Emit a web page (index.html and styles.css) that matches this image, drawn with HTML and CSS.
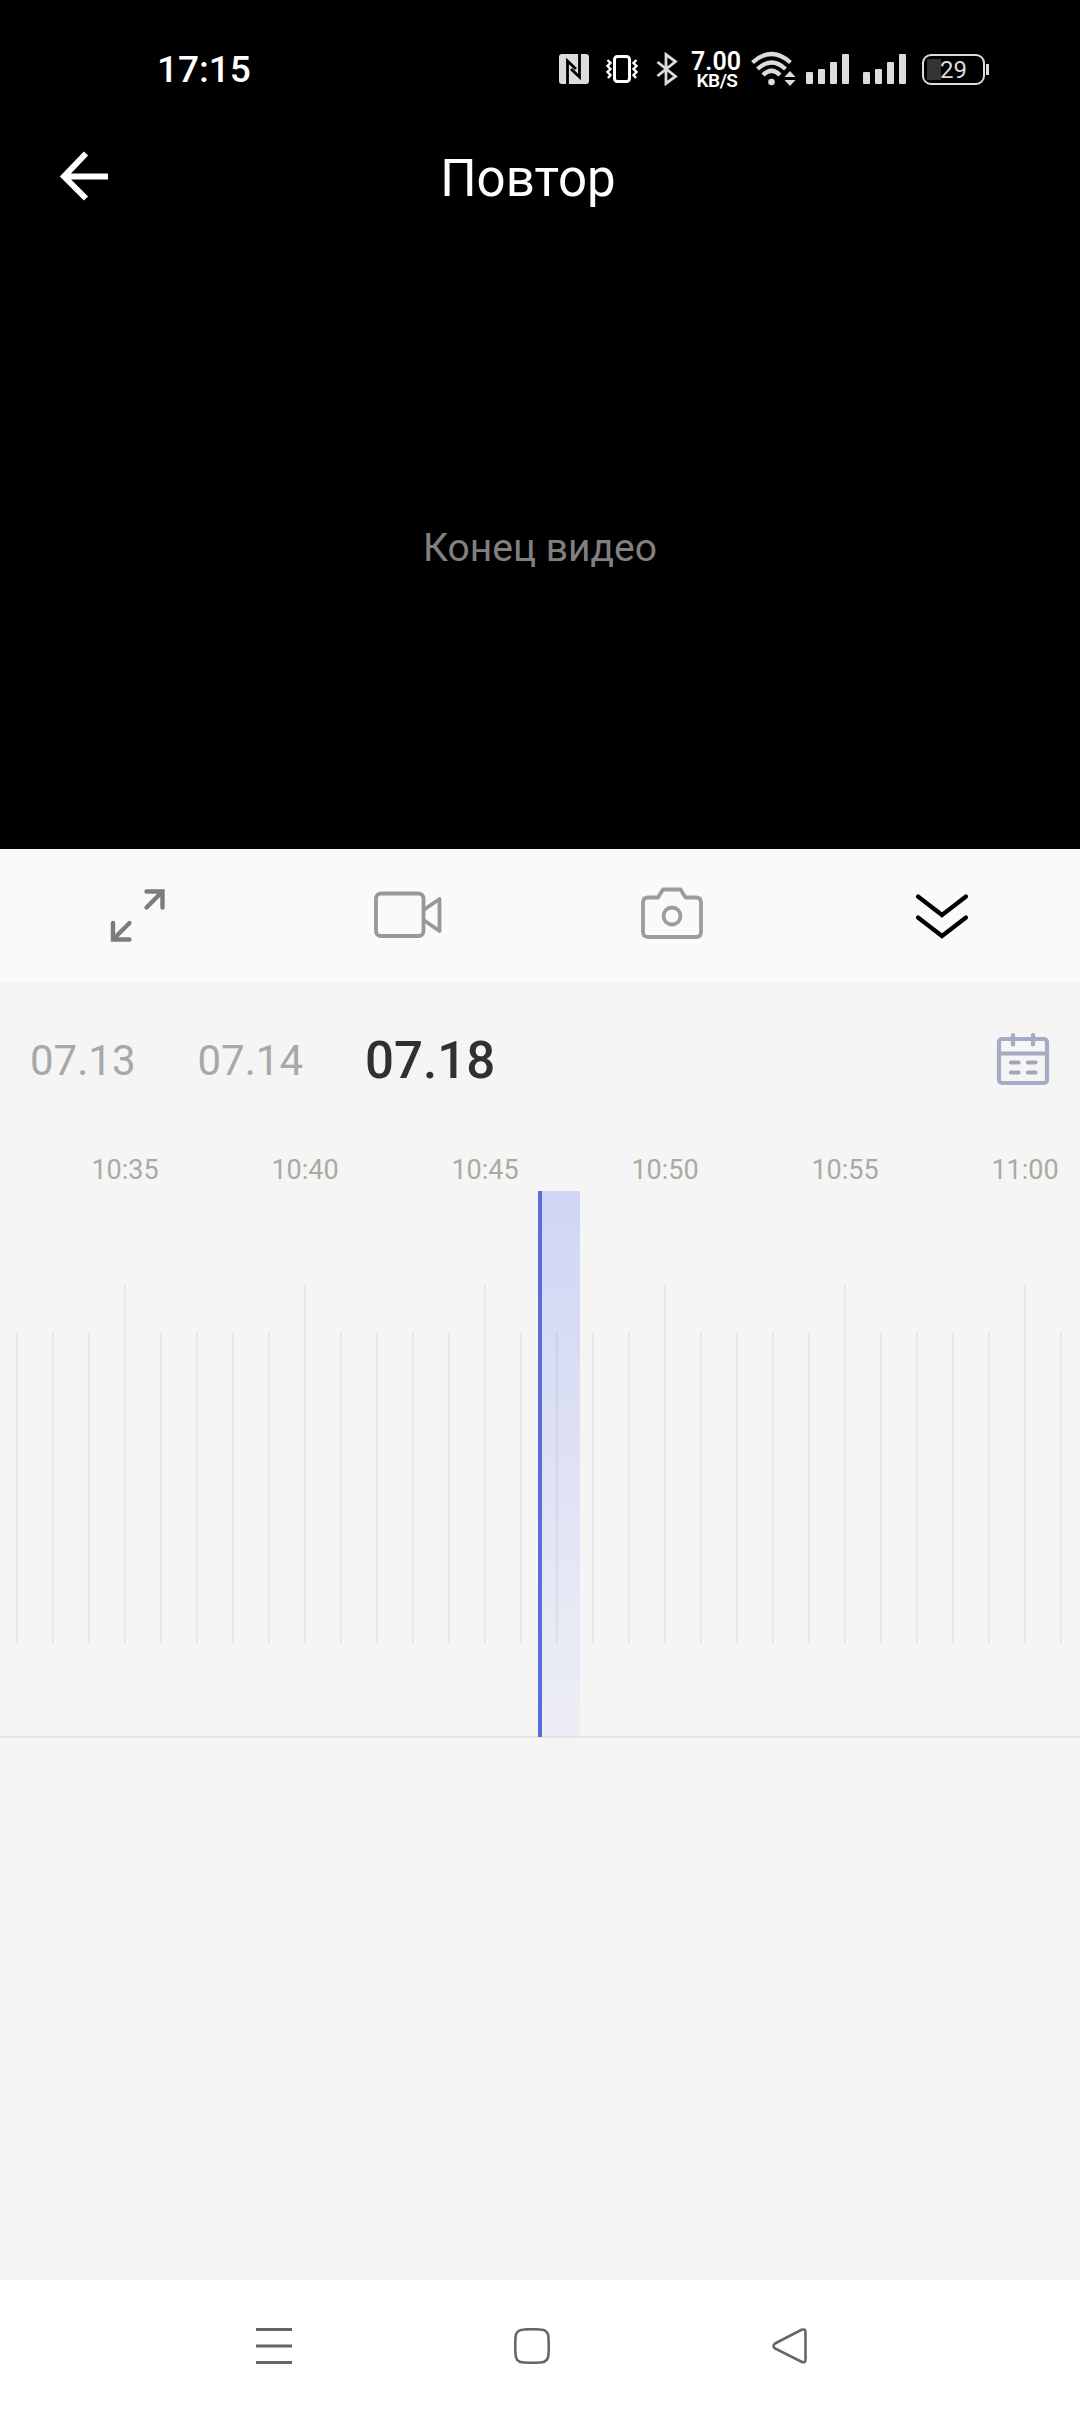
FILE: index.html
```html
<!DOCTYPE html>
<html lang="ru">
<head>
  <meta charset="UTF-8">
  <meta name="viewport" content="width=device-width, initial-scale=1.0">
  <title>Повтор</title>
  <link rel="stylesheet" href="styles.css">
</head>
<body>
  <div class="player">
    <div class="status">
      <div class="clock">17:15</div>
      <div class="status-icons">
        <svg class="nfc" width="30" height="30" viewBox="0 0 30 30">
          <rect width="30" height="30" rx="3" fill="#dcdcdc"/>
          <path d="M8.500 30V7L17 15M20.500 0V23L12 15" fill="none" stroke="#000" stroke-width="2.800"/>
        </svg>
        <svg class="vibrate" width="32" height="30" viewBox="0 0 32 30" fill="none" stroke="#fff">
          <rect x="8.500" y="2.500" width="15" height="25" rx="3" stroke-width="3"/>
          <path d="M1.500 6l3 3-3 3 3 3-3 3 3 3-2.500 3M30.500 6l-3 3 3 3-3 3 3 3-3 3 2.500 3" stroke-width="2.400"/>
        </svg>
        <svg class="bluetooth" width="22" height="34" viewBox="0 0 22 34" fill="none" stroke="#dcdcdc" stroke-width="2.800">
          <path d="M1.500 10L19.500 24.500 10 31.500V2.500L19.500 9.500 1.500 24"/>
        </svg>
        <div class="speed"><span class="rate">7.00</span><span class="unit">KB/S</span></div>
        <svg class="wifi" width="46" height="36" viewBox="0 0 46 36">
          <g fill="none" stroke="#dcdcdc" stroke-width="4.200">
            <path d="M1.500 11.500Q20.500-5.500 39.500 11.500"/>
            <path d="M6.500 18Q20.500 5 34.500 18"/>
            <path d="M12 24Q20.500 15.500 29 24"/>
          </g>
          <circle cx="20.500" cy="31" r="3.300" fill="#dcdcdc"/>
          <path d="M39 20l5.500 6h-11zM39 35l5.500-6h-11z" fill="#dcdcdc"/>
        </svg>
        <div class="signal"><i></i><i></i><i></i><i></i></div>
        <div class="signal"><i></i><i></i><i></i><i></i></div>
        <div class="battery">29</div>
        <div class="battery-tip"></div>
      </div>
    </div>
    <header class="header">
      <svg class="back" width="50" height="50" viewBox="0 0 50 50" fill="none" stroke="#fff" stroke-width="6">
        <path d="M27 2.500L5 25.500 27 47.500M5 25.500H49"/>
      </svg>
      <h1>Повтор</h1>
    </header>
    <div class="message">Конец видео</div>
  </div>

  <div class="toolbar">
    <svg class="expand" width="56" height="56" viewBox="0 0 56 56" fill="none" stroke="#7c7c7c" stroke-width="4.400" stroke-linecap="round">
      <path d="M36.500 4.500H52.500V20.500M52 5L36.500 20.500M3 36V52.500H19.500M3.500 52L19.500 36"/>
    </svg>
    <svg class="video" width="70" height="50" viewBox="0 0 70 50" fill="none" stroke="#989898" stroke-width="3.800" stroke-linejoin="round">
      <rect x="3" y="3.500" width="47.500" height="42.500" rx="5"/>
      <path d="M50.500 20L66.500 9V41L50.500 30"/>
    </svg>
    <svg class="camera" width="64" height="54" viewBox="0 0 64 54" fill="none" stroke="#9c9c9c" stroke-width="3.800" stroke-linejoin="round">
      <path d="M8 10.500H18L23 2.500H40.500L45.500 10.500H56Q61 10.500 61 15.500V45Q61 50 56 50H8Q3 50 3 45V15.500Q3 10.500 8 10.500Z"/>
      <circle cx="32" cy="29" r="8.500"/>
    </svg>
    <svg class="more" width="54" height="48" viewBox="0 0 54 48" fill="none" stroke="#000" stroke-width="4.200" stroke-linecap="round">
      <path d="M3 4.500L27 23 51 4.500M3 25.500L27 44 51 25.500"/>
    </svg>
  </div>

  <div class="dates">
    <span class="date">07.13</span>
    <span class="date">07.14</span>
    <span class="date active">07.18</span>
    <svg class="calendar" width="54" height="54" viewBox="0 0 54 54" fill="none" stroke="#a5aac5" stroke-width="4.200" stroke-linecap="round">
      <rect x="3" y="7" width="48" height="44" rx="3"/>
      <path d="M4 21.500H50M17 3V12.500M37 3V12.500"/>
      <path d="M15 30.500H22.500M32 30.500H39.500M15 40.500H22.500M32 40.500H39.500" stroke="#a2a5b5"/>
    </svg>
  </div>

  <div class="timeline">
    <div class="hours">
      <span>10:35</span><span>10:40</span><span>10:45</span><span>10:50</span><span>10:55</span><span>11:00</span>
    </div>
    <div class="ruler" id="ruler">
      <div class="record"></div>
    </div>
  </div>

  <div class="navbar">
    <svg class="menu" width="36" height="36" viewBox="0 0 36 36" stroke="#666" stroke-width="3">
      <path d="M0 1.500H36M0 18H36M0 34.500H36"/>
    </svg>
    <svg class="home" width="36" height="36" viewBox="0 0 36 36" fill="none" stroke="#666" stroke-width="2.600">
      <path d="M10 1.500Q18 1 26 1.500Q34.500 1.500 34.500 10Q35 18 34.500 26Q34.500 34.500 26 34.500Q18 35 10 34.500Q1.500 34.500 1.500 26Q1 18 1.500 10Q1.500 1.500 10 1.500Z"/>
    </svg>
    <svg class="prev" width="36" height="36" viewBox="0 0 36 36" fill="none" stroke="#666" stroke-width="2.600">
      <path d="M3 15.500L29.500 1.800Q33.500 .5 33.500 4V31.500Q33.500 35.500 29.500 33.700L3 20.500Q0 18 3 15.500Z"/>
    </svg>
  </div>

  <script>
    const ruler = document.getElementById("ruler");

    // One tick per minute, a longer one every five minutes
    for (let i = 0; i < 30; i++) {
      const tick = document.createElement("div");
      tick.className = i % 5 === 3 ? "tick major" : "tick";
      ruler.appendChild(tick);
    }
  </script>
</body>
</html>
```
FILE: styles.css
```css
* {
  box-sizing: border-box;
}
body {
  margin: 0;
  width: 1080px;
  height: 2412px;
  display: flex;
  flex-direction: column;
  background: #f5f5f5;
  font-family: Roboto, sans-serif;
  overflow: hidden;
}
svg {
  display: block;
  flex: none;
}
.player {
  height: 849px;
  background: #000;
  color: #fff;
}
.status {
  height: 140px;
  padding: 0 91px 0 157px;
  display: flex;
  justify-content: space-between;
}
.clock {
  padding-top: 48px;
  font-size: 37px;
  font-weight: 500;
  line-height: 44px;
}
.status-icons {
  display: flex;
  align-items: flex-start;
  padding-top: 51px;
}
.nfc {
  margin: 3px 17px 0 0;
}
.vibrate {
  margin: 3px 18px 0 0;
}
.bluetooth {
  margin: 1px 14px 0 0;
}
.speed {
  width: 48px;
  margin-right: 11px;
  display: flex;
  flex-direction: column;
  align-items: center;
  font-weight: 600;
}
.rate {
  font-size: 25px;
  line-height: 22px;
}
.unit {
  font-size: 19px;
  line-height: 16px;
  margin-left: 2px;
  letter-spacing: -0.5px;
}
.wifi {
  margin-right: 9px;
}
.signal {
  display: flex;
  align-items: flex-end;
  gap: 5px;
  height: 33px;
  margin-right: 14px;
}
.signal i {
  width: 7px;
  height: 12px;
  border-radius: 1px;
  background: #dcdcdc;
}
.signal i:nth-child(2) {
  height: 15px;
}
.signal i:nth-child(3) {
  height: 22px;
}
.signal i:nth-child(4) {
  height: 30px;
}
.battery {
  width: 63px;
  height: 31px;
  margin: 3px 1px 0 2px;
  border: 2px solid #dcdcdc;
  border-radius: 9px;
  background: linear-gradient(#333, #333) 3px 3px / 14px 21px no-repeat;
  color: #dcdcdc;
  font: 24px/28px Roboto, sans-serif;
  text-align: center;
}
.battery-tip {
  width: 3px;
  height: 11px;
  margin-top: 13px;
  background: #dcdcdc;
}
.header {
  height: 76px;
  display: flex;
  align-items: center;
  padding: 0 60px 0 59px;
}
.header h1 {
  flex: 1;
  margin: 2px 73px 0 0;
  font-size: 51px;
  font-weight: 400;
  line-height: 60px;
  text-align: center;
}
.back {
  margin-top: -5px;
}
.message {
  padding-top: 309px;
  color: #808080;
  font-size: 39px;
  line-height: 46px;
  text-align: center;
}
.toolbar {
  height: 133px;
  padding: 0 110px;
  display: flex;
  align-items: center;
  background: #fafafa;
}
.expand {
  margin-top: -2px;
}
.video {
  margin: -2px 0 0 207px;
}
.camera {
  margin: -4px 0 0 197px;
}
.more {
  margin-left: 211px;
}
.dates {
  height: 158px;
  padding: 0 30px;
  display: flex;
  align-items: center;
}
.date {
  margin-right: 62px;
  color: #a8a8a8;
  font-size: 42px;
  line-height: 50px;
}
.date.active {
  margin-right: 0;
  color: #303030;
  font-size: 51px;
  font-weight: 500;
}
.calendar {
  margin: -4px 0 0 auto;
}
.timeline {
  height: 1140px;
}
.hours {
  display: flex;
  height: 51px;
  padding-left: 35px;
  padding-top: 14px;
}
.hours span {
  flex: 0 0 180px;
  color: #aaaa9f;
  font-size: 27px;
  line-height: 32px;
  text-align: center;
}
.ruler {
  position: relative;
  display: flex;
  height: 547px;
  padding-left: 16px;
  border-bottom: 2px solid #e6e6e6;
}
.tick {
  flex: 0 0 36px;
  height: 311px;
  margin-top: 141px;
  border-left: 2px solid #e8e8e8;
}
.tick.major {
  height: 358px;
  margin-top: 94px;
}
/* recorded fragment, starts at the playhead */
.record {
  position: absolute;
  left: 538px;
  top: 0;
  width: 42px;
  height: 546px;
  border-left: 4px solid #5b6ddb;
  background: linear-gradient(rgba(91, 113, 238, 0.24), rgba(91, 113, 238, 0.05));
}
.navbar {
  height: 132px;
  padding: 48px 256px 0;
  display: flex;
  background: #fff;
}
.home {
  margin-left: 222px;
}
.prev {
  margin-left: 222px;
}
```
